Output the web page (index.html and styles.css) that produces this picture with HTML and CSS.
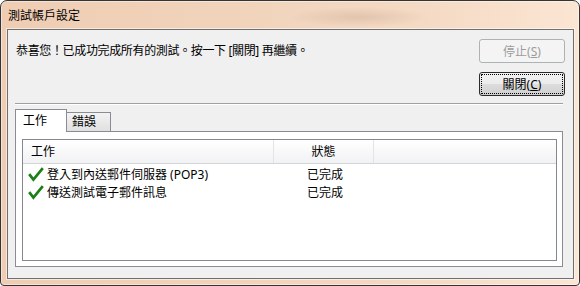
FILE: index.html
```html
<!DOCTYPE html>
<html lang="zh-Hant">

<head>
  <meta charset="UTF-8">
  <meta name="viewport" content="width=device-width, initial-scale=1.0">
  <title>測試帳戶設定</title>
  <link rel="stylesheet" href="styles.css">
</head>

<body>
  <div class="window">
    <div class="titlebar">測試帳戶設定</div>

    <div class="client">
      <div class="top">
        <p class="message">恭喜您！已成功完成所有的測試。按一下 [關閉] 再繼續。</p>
        <div class="actions">
          <button class="btn" disabled>停止(<u>S</u>)</button>
          <button class="btn default">關閉(<u>C</u>)</button>
        </div>
      </div>

      <div class="separator"></div>

      <div class="tabs">
        <div class="tab active">工作</div>
        <div class="tab inactive">錯誤</div>
      </div>

      <div class="panel">
        <div class="list">
          <div class="list-head">
            <div class="col-task">工作</div>
            <div class="col-status">狀態</div>
            <div class="col-rest"></div>
          </div>

          <div class="row">
            <div class="col-task">
              <svg class="check" width="16" height="16" viewBox="0 0 16 16">
                <path d="M1.2 7.2 L5.4 12.6 L14.8 1.2" />
              </svg>
              登入到內送郵件伺服器 (POP3)
            </div>
            <div class="col-status">已完成</div>
          </div>

          <div class="row">
            <div class="col-task">
              <svg class="check" width="16" height="16" viewBox="0 0 16 16">
                <path d="M1.2 7.2 L5.4 12.6 L14.8 1.2" />
              </svg>
              傳送測試電子郵件訊息
            </div>
            <div class="col-status">已完成</div>
          </div>
        </div>
      </div>
    </div>
  </div>
</body>

</html>
```

FILE: styles.css
```css
body {
  margin: 0;
  background: #ffffff;
  font-family: "Noto Sans", "Noto Sans CJK TC", sans-serif;
  font-size: 12px;
  color: #000;
}

.window {
  width: 580px;
  height: 286px;
  box-sizing: border-box;
  border: 1px solid #343434;
  border-radius: 7px 7px 4px 4px;
  background:
    radial-gradient(ellipse 70px 10px at 62% 16px, rgba(150, 110, 85, 0.18), transparent),
    linear-gradient(90deg, #eecdb3 0%, #f1d3bb 40%, #f4d9c3 70%, #fbe5d3 100%);
  box-shadow: inset 0 0 0 1px rgba(255, 255, 255, 0.45);
  display: flex;
  flex-direction: column;
}

.titlebar {
  height: 28px;
  line-height: 29px;
  padding-left: 7px;
}

.client {
  flex: 1;
  margin: 0 5px 6px 6px;
  border: 1px solid #6f6f6f;
  background: #f0f0f0;
  padding: 9px 8px 11px 7px;
  display: flex;
  flex-direction: column;
  box-shadow: 0 0 0 1px rgba(255, 255, 255, 0.55);
}

.top {
  display: flex;
  justify-content: space-between;
}

.message {
  margin: 0 0 0 1px;
  line-height: 24px;
  letter-spacing: -0.35px;
}

.actions {
  display: flex;
  flex-direction: column;
  gap: 9px;
}

.btn {
  width: 86px;
  height: 24px;
  box-sizing: border-box;
  border: 1px solid #707070;
  border-radius: 3px;
  background: linear-gradient(#f2f2f2 0%, #ebebeb 50%, #dddddd 50%, #cfcfcf 100%);
  font: inherit;
  color: #000;
  padding: 0;
}

.btn:disabled {
  border-color: #adb2b5;
  background: #f4f4f4;
  color: #9c9c9c;
}

.btn.default {
  border-color: #2b2b2b;
  outline: 1px dotted #000;
  outline-offset: -3px;
}

.separator {
  margin: 7px 2px 0 0;
  border-top: 1px solid #a0a0a0;
  border-bottom: 1px solid #ffffff;
}

.tabs {
  display: flex;
  align-items: flex-end;
  margin-top: 4px;
  height: 22px;
}

.tab {
  box-sizing: border-box;
  border: 1px solid #898c95;
  border-bottom: none;
}

.tab.active {
  width: 52px;
  height: 23px;
  margin-bottom: -1px;
  padding-left: 7px;
  line-height: 22px;
  background: #ffffff;
  position: relative;
}

.tab.inactive {
  width: 44px;
  height: 19px;
  border-left: none;
  padding-left: 5px;
  line-height: 18px;
  background: linear-gradient(#f3f3f3, #e0e0e0);
}

.panel {
  flex: 1;
  margin-right: 2px;
  border: 1px solid #898c95;
  background: #ffffff;
  padding: 7px 5px 5px 6px;
  display: flex;
  flex-direction: column;
}

.list {
  flex: 1;
  border: 1px solid #828790;
}

.list-head {
  display: flex;
  height: 23px;
  border-bottom: 1px solid #d5d5d5;
  background: linear-gradient(#ffffff, #f1f2f4);
}

.list-head > div {
  box-sizing: border-box;
  padding-top: 1px;
  line-height: 22px;
  border-right: 1px solid #e3e4e6;
}

.col-task {
  width: 251px;
  box-sizing: border-box;
  padding-left: 8px;
}

.col-status {
  width: 100px;
  text-align: center;
}

.list-head .col-rest {
  flex: 1;
  border-right: none;
}

.row {
  display: flex;
  height: 18px;
  line-height: 18px;
}

.list-head + .row {
  margin-top: 2px;
}

.row .col-task {
  display: flex;
  align-items: center;
  gap: 3px;
  padding-left: 5px;
}

.row .col-status {
  margin-left: 1px;
}

.check path {
  fill: none;
  stroke: #1c7f19;
  stroke-width: 2.7;
}
```
